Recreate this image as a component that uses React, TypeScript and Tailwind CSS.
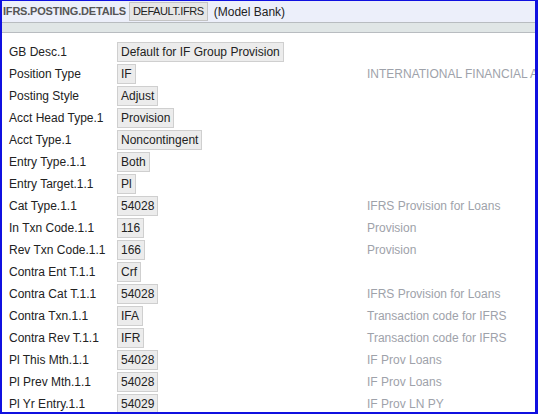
import React from 'react';

type Row = { label: string; value: string; desc?: string };

const rows: Row[] = [
  { label: 'GB Desc.1', value: 'Default for IF Group Provision' },
  { label: 'Position Type', value: 'IF', desc: 'INTERNATIONAL FINANCIAL ACCOUNTING' },
  { label: 'Posting Style', value: 'Adjust' },
  { label: 'Acct Head Type.1', value: 'Provision' },
  { label: 'Acct Type.1', value: 'Noncontingent' },
  { label: 'Entry Type.1.1', value: 'Both' },
  { label: 'Entry Target.1.1', value: 'Pl' },
  { label: 'Cat Type.1.1', value: '54028', desc: 'IFRS Provision for Loans' },
  { label: 'In Txn Code.1.1', value: '116', desc: 'Provision' },
  { label: 'Rev Txn Code.1.1', value: '166', desc: 'Provision' },
  { label: 'Contra Ent T.1.1', value: 'Crf' },
  { label: 'Contra Cat T.1.1', value: '54028', desc: 'IFRS Provision for Loans' },
  { label: 'Contra Txn.1.1', value: 'IFA', desc: 'Transaction code for IFRS' },
  { label: 'Contra Rev T.1.1', value: 'IFR', desc: 'Transaction code for IFRS' },
  { label: 'Pl This Mth.1.1', value: '54028', desc: 'IF Prov Loans' },
  { label: 'Pl Prev Mth.1.1', value: '54028', desc: 'IF Prov Loans' },
  { label: 'Pl Yr Entry.1.1', value: '54029', desc: 'IF Prov LN PY' },
];

export default function App() {
  return (
    <div
      className="w-[538px] h-[414px] overflow-hidden bg-white border-t border-l-2 border-r-[3px] border-b-2 border-[#1010e0] text-[12px] text-[#222]"
      style={{ fontFamily: '"Liberation Sans", Arial, sans-serif' }}
    >
      {/* title bar */}
      <div className="h-[22px] flex items-center bg-[#eceffa] border-b border-[#b8bcc0] whitespace-nowrap">
        <span className="pl-[1px] text-[11px] tracking-[-0.2px] font-bold text-[#555]">IFRS.POSTING.DETAILS</span>
        <span className="ml-[3px] h-[19px] px-[3px] flex items-center bg-[#e6e6e6] border border-[#c4c4c4] text-[11px] tracking-[-0.4px] text-[#222]">
          DEFAULT.IFRS
        </span>
        <span className="ml-[6px] text-[#222]">(Model Bank)</span>
      </div>
      <div className="h-[10px] bg-[#e0e6e6] border-b border-[#b8bcc0]" />

      {/* fields */}
      <div className="pt-[8px] flex flex-col">
        {rows.map((r) => (
          <div key={r.label} className="h-[22px] flex items-center whitespace-nowrap">
            <div className="w-[115px] shrink-0 pl-[7px]">{r.label}</div>
            <div className="w-[250px] shrink-0 flex">
              <span className="h-[20px] px-[3px] flex items-center bg-[#ececec] border border-[#cfcfcf]">
                {r.value}
              </span>
            </div>
            {r.desc && <div className="shrink-0 text-[#9ea2aa]">{r.desc}</div>}
          </div>
        ))}
      </div>
    </div>
  );
}
